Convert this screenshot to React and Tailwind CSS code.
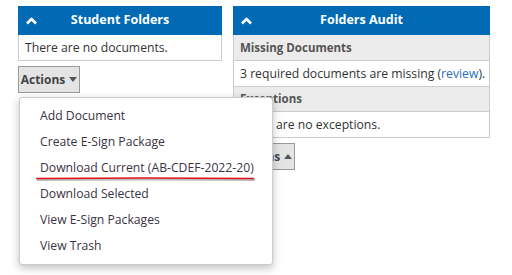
import React from "react";

const font = { fontFamily: '"Open Sans", "Noto Sans", sans-serif' };

function ChevronUp() {
  return (
    <svg width="11" height="8" viewBox="0 0 11 8" className="shrink-0">
      <path d="M1 6.5 L5.5 2 L10 6.5" fill="none" stroke="#fff" strokeWidth="2.6" strokeLinejoin="round" />
    </svg>
  );
}

function Caret({ up }) {
  return (
    <svg width="8" height="5" viewBox="0 0 8 5" className="ml-1 shrink-0">
      <path d={up ? "M0 5 L4 0 L8 5 Z" : "M0 0 L8 0 L4 5 Z"} fill="#555" />
    </svg>
  );
}

function PanelHeader({ title }) {
  return (
    <div className="h-[29px] bg-[#006bb4] flex items-center px-[8px] relative">
      <ChevronUp />
      <div className="absolute inset-0 flex items-center justify-center text-white font-bold text-[12.5px]">{title}</div>
    </div>
  );
}

function ActionsButton({ up }) {
  return (
    <button className="h-[27px] w-[62px] mt-[5px] bg-[#e4e4e4] border border-[#999] flex items-center justify-center text-[12px] font-bold text-[#444]">
      Actions
      <Caret up={up} />
    </button>
  );
}

const menuItems = [
  "Add Document",
  "Create E-Sign Package",
  "Download Current (AB-CDEF-2022-20)",
  "Download Selected",
  "View E-Sign Packages",
  "View Trash",
];

export default function App() {
  return (
    <div className="w-[512px] h-[275px] bg-white overflow-hidden text-[#333] text-[12.2px]" style={font}>
      <div className="flex pl-[18px] pt-[6px] gap-[11px]">
        <div className="w-[204px]">
          <PanelHeader title="Student Folders" />
          <div className="border border-t-0 border-[#ccc] h-[26px] leading-[25px] px-[6px]">
            There are no documents.
          </div>
          <div className="relative">
            <ActionsButton />
            <div className="absolute left-[1px] top-[31px] w-[254px] bg-white border border-[#ccc] rounded-[3px] shadow-[0_3px_8px_rgba(0,0,0,0.25)] py-[5px] z-10">
              {menuItems.map((item) => (
                <div key={item} className="h-[26px] leading-[26px] pl-[20px] text-[#3a3344] whitespace-nowrap">
                  {item}
                </div>
              ))}
              <svg className="absolute left-[15px] top-[78px]" width="222" height="6" viewBox="0 0 222 6">
                <path d="M1 2.5 Q110 1.5 219 2.5" fill="none" stroke="#bbb" strokeWidth="2" transform="translate(1 1.5)" />
                <path d="M1 2.5 Q110 1.5 219 2.5" fill="none" stroke="#e3101a" strokeWidth="1.6" />
              </svg>
            </div>
          </div>
        </div>
        <div className="w-[257px]">
          <PanelHeader title="Folders Audit" />
          <div className="border border-t-0 border-[#ccc]">
            <div className="h-[25px] leading-[25px] bg-[#ececec] px-[6px] font-bold text-[11.5px] text-[#555]">Missing Documents</div>
            <div className="h-[26px] leading-[25px] border-t border-[#ccc] px-[6px] whitespace-nowrap">
              3 required documents are missing (<span className="text-[#2a6ebb]">review</span>).
            </div>
            <div className="h-[25px] leading-[24px] bg-[#ececec] border-t border-[#ccc] px-[6px] font-bold text-[11.5px] text-[#555]">Exceptions</div>
            <div className="h-[26px] leading-[25px] border-t border-[#ccc] px-[6px]">There are no exceptions.</div>
          </div>
          <ActionsButton up />
        </div>
      </div>
    </div>
  );
}
